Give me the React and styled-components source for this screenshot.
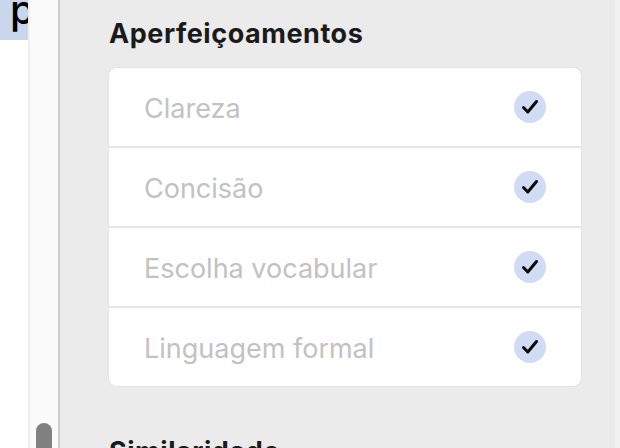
import React from "react";
import styled, { createGlobalStyle } from "styled-components";

const Global = createGlobalStyle`
  html, body { margin: 0; padding: 0; background: #fff; overflow: hidden; }
  body { font-family: Inter, "Liberation Sans", sans-serif; }
`;
const Page = styled.div`
  display: flex; width: 620px; height: 448px; overflow: hidden;
`;
const Editor = styled.div`
  width: 28px; flex: none; background: #fff; overflow: hidden;
`;
const Highlight = styled.div`
  height: 40px; background: #c8d6ee; padding-left: 10px; overflow: hidden;
  font-size: 40px; font-weight: 500; line-height: 20px; color: #000;
`;
const Track = styled.div`
  width: 32px; flex: none; box-sizing: border-box; background: #fafafa;
  border-left: 2px solid #f0f0f0; border-right: 2px solid #cdcdcd;
  padding: 423px 0 0 6px;
`;
const Thumb = styled.div`
  width: 16px; height: 60px; border-radius: 8px; background: #808080;
`;
const Panel = styled.div`
  flex: none; width: 555px; box-sizing: border-box; background: #ebebeb;
  padding: 18px 34px 0 49px;
`;
const Side = styled.div`
  flex: 1; background: #f1f1f1;
`;
const Heading = styled.h2`
  margin: 0; font-size: 27px; line-height: 31px; font-weight: 650; color: #1a1a1a; letter-spacing: 0.55px;
`;
const Card = styled.div`
  margin: 19px 0 50px; background: #fff; border-radius: 8px;
  box-shadow: 0 0 0 1px #e4e4e4; overflow: hidden;
`;
const Row = styled.div`
  display: flex; align-items: center; justify-content: space-between;
  height: 80px; box-sizing: border-box; padding: 0 35px 0 35px;
  border-bottom: 2px solid #e6e6e6;
  &:last-child { border-bottom: none; height: 78px; }
`;
const Label = styled.span`
  font-size: 27px; color: #c2c2c2; padding-top: 2px;
`;
const Check = styled.span`
  display: flex; align-items: center; justify-content: center;
  width: 32px; height: 32px; border-radius: 50%; background: #cfdcf3;
`;
const items = ["Clareza", "Concisão", "Escolha vocabular", "Linguagem formal"];

export default function App() {
  return (
    <Page>
      <Global />
      <Editor><Highlight>p</Highlight></Editor>
      <Track><Thumb /></Track>
      <Panel>
        <Heading>Aperfeiçoamentos</Heading>
        <Card>
          {items.map((t) => (
            <Row key={t}>
              <Label>{t}</Label>
              <Check>
                <svg width="18" height="18" viewBox="0 0 18 18" fill="none">
                  <path d="M2.5 9.5 L6.8 14 L15.5 3.5" stroke="#0a0a0a" strokeWidth="3" strokeLinecap="round" strokeLinejoin="round" />
                </svg>
              </Check>
            </Row>
          ))}
        </Card>
        <Heading>Similaridade</Heading>
      </Panel>
      <Side />
    </Page>
  );
}
